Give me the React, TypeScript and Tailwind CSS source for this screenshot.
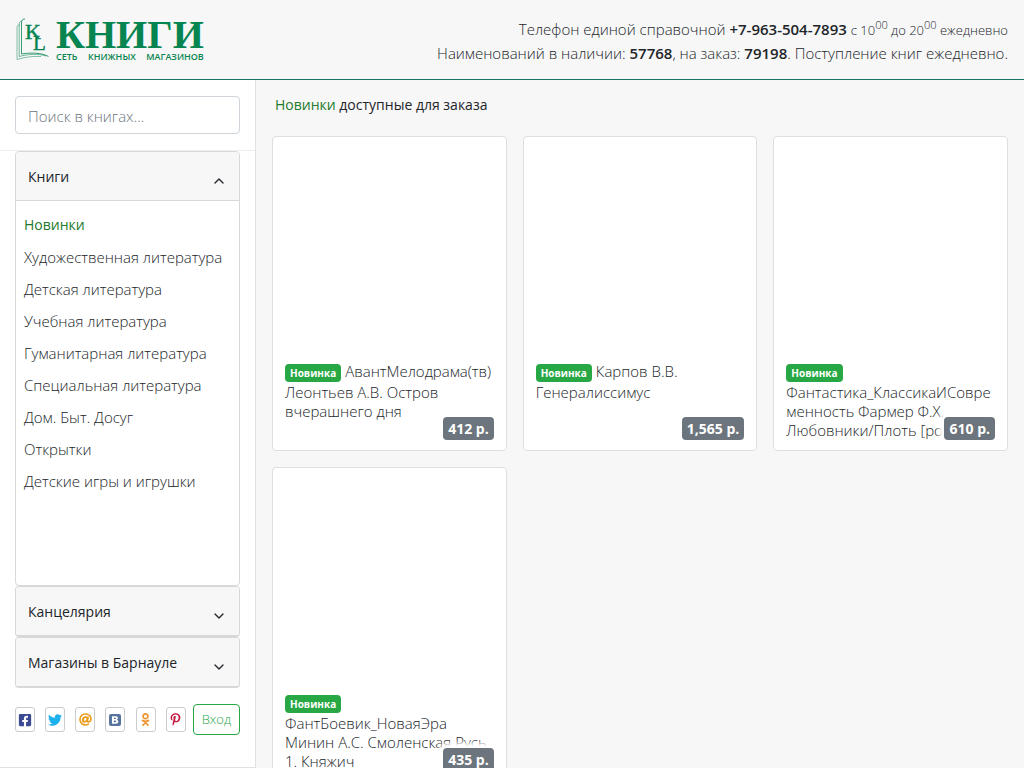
import { ChevronDown, ChevronUp } from "lucide-react";
import { FaFacebookSquare, FaTwitter, FaAt, FaOdnoklassniki, FaPinterestP } from "react-icons/fa";

const categories = [
  "Новинки",
  "Художественная литература",
  "Детская литература",
  "Учебная литература",
  "Гуманитарная литература",
  "Специальная литература",
  "Дом. Быт. Досуг",
  "Открытки",
  "Детские игры и игрушки",
];

const books = [
  { title: "АвантМелодрама(тв) Леонтьев А.В. Остров вчерашнего дня", price: "412 р." },
  { title: "Карпов В.В. Генералиссимус", price: "1,565 р." },
  { title: "Фантастика_КлассикаИСовременность Фармер Ф.Х. Любовники/Плоть [ро", price: "610 р." },
  { title: "ФантБоевик_НоваяЭра Минин А.С. Смоленская Русь 1. Княжич", price: "435 р." },
];

function VkIcon() {
  return (
    <svg viewBox="0 0 14 14" className="size-3.5">
      <rect x="1" y="1" width="12" height="12" rx="2" fill="#56749f" />
      <path
        d="M4 3.300h3.600c1.500 0 2.300.6 2.300 1.800 0 .8-.4 1.300-1.100 1.600.9.2 1.500.9 1.500 1.800 0 1.500-1 2.200-2.700 2.200H4zM6 4.800v1.300h1c.6 0 .9-.2.9-.7s-.3-.6-.9-.6zm0 2.600v1.800h1.200c.7 0 1-.3 1-.9s-.3-.9-1-.9z"
        fill="#fff"
        fillRule="evenodd"
      />
    </svg>
  );
}

const socials = [
  { name: "Facebook", icon: <FaFacebookSquare size={14} color="#3b4a93" /> },
  { name: "Twitter", icon: <FaTwitter size={14} color="#1cb1ec" /> },
  { name: "Mail.ru", icon: <FaAt size={13} color="#eb9c1c" /> },
  { name: "ВКонтакте", icon: <VkIcon /> },
  { name: "Одноклассники", icon: <FaOdnoklassniki size={13} color="#f0932b" /> },
  { name: "Pinterest", icon: <FaPinterestP size={13} color="#c3143a" /> },
];

function Logo() {
  return (
    <a href="#" className="flex items-start text-[#078550]">
      <svg viewBox="0 0 36 44" className="h-11 w-9 overflow-visible" fill="none" stroke="currentColor">
        <path d="M9 1C6 1 5.500 3 5.500 5v31c9-1.500 20-1.500 27 2.500" strokeWidth=".8" />
        <path d="M6 3C3.500 3 3.200 5 3.200 7v31.500c9-2.500 19-3 27-.5" strokeWidth=".7" opacity=".8" />
        <path d="M4 7C1.500 7 1 8 1 10v31.500c8-2.500 16-3.500 24-3" strokeWidth=".7" opacity=".7" />
        <text x="9" y="21" fontFamily="Liberation Serif, serif" fontSize="22" fill="currentColor" strokeWidth=".4">K</text>
        <text x="17" y="32" fontFamily="Liberation Serif, serif" fontSize="21" fill="currentColor" strokeWidth=".4">L</text>
      </svg>
      <span className="flex flex-col pl-1">
        <span className="font-['Liberation_Serif',serif] text-[40px] leading-[34px] font-bold">КНИГИ</span>
        <span className="flex justify-between text-[9px] leading-[10px] font-semibold">
          <span>СЕТЬ</span>
          <span>КНИЖНЫХ</span>
          <span>МАГАЗИНОВ</span>
        </span>
      </span>
    </a>
  );
}

function SectionButton({ label, open = false }: { label: string; open?: boolean }) {
  const Icon = open ? ChevronUp : ChevronDown;
  return (
    <button
      type="button"
      aria-expanded={open}
      className="flex h-12 w-full items-center justify-between bg-[#f7f7f7] px-3 pt-0.5 text-left text-sm font-medium"
    >
      {label}
      <Icon size={16} className="mt-2" />
    </button>
  );
}

function BookCard({ title, price }: { title: string; price: string }) {
  return (
    <article className="relative flex h-[315px] flex-col justify-end rounded border border-[#dfdfdf] bg-white px-3 pb-2.5">
      <a href="#" className="block h-[78px] leading-[19px] break-words">
        <span className="my-px mr-1 inline-block rounded bg-[#28a745] px-[5px] text-[10px] leading-[18px] font-bold text-white">
          Новинка
        </span>
        {title}
      </a>
      <span className="absolute right-3 bottom-2.5 rounded bg-[#6c757d] px-[5px] text-sm leading-[23px] font-bold text-white shadow-[0_0_4px_5px_#fff]">
        {price}
      </span>
    </article>
  );
}

export default function App() {
  return (
    <div className="flex h-screen flex-col overflow-hidden bg-[#f7f7f7] font-['Open_Sans','Noto_Sans',sans-serif] text-[15px] font-light text-[#212529]">
      <header className="flex h-20 shrink-0 items-center justify-between border-b border-[#1a7560] px-4">
        <Logo />
        <div className="pt-0.5 text-right leading-6">
          <p>
            Телефон единой справочной <b className="font-semibold">+7-963-504-7893</b>{" "}
            <small className="text-[13px] leading-none">
              с 10<sup className="text-[11px]">00</sup> до 20<sup className="text-[11px]">00</sup> ежедневно
            </small>
          </p>
          <p>
            Наименований в наличии: <b className="font-semibold">57768</b>, на заказ:{" "}
            <b className="font-semibold">79198</b>. Поступление книг ежедневно.
          </p>
        </div>
      </header>

      <div className="flex min-h-0 flex-1">
        <aside className="flex w-64 shrink-0 flex-col border-r border-b border-[#dfe1e3] bg-white">
          <form className="border-b border-[#eeeeee] px-[15px] py-4">
            <input
              type="search"
              aria-label="Поиск в книгах"
              placeholder="Поиск в книгах..."
              className="block h-[38px] w-full rounded border border-[#ced4da] bg-white px-3 pt-0.5 font-light placeholder:text-[#6c757d]"
            />
          </form>
          <nav className="px-[15px]">
            <section className="overflow-hidden rounded border border-[#d8d8d8]">
              <SectionButton label="Книги" open />
              <ul className="h-[385px] border-t border-[#d8d8d8] px-2 pt-2">
                {categories.map((name, i) => (
                  <li key={name}>
                    <a href="#" className={i === 0 ? "block text-sm leading-8 font-medium text-[#1f7a2c]" : "block leading-8"}>
                      {name}
                    </a>
                  </li>
                ))}
              </ul>
            </section>
            <section className="overflow-hidden rounded border border-b-2 border-[#d8d8d8]">
              <SectionButton label="Канцелярия" />
            </section>
            <section className="overflow-hidden rounded border border-b-2 border-[#d8d8d8]">
              <SectionButton label="Магазины в Барнауле" />
            </section>
          </nav>
          <div className="flex items-center gap-[7px] px-[15px] pt-4">
            <div className="flex flex-1 items-center justify-between">
              {socials.map(({ name, icon }) => (
                <a
                  key={name}
                  href="#"
                  aria-label={name}
                  className="flex h-[25px] w-5 items-center justify-center rounded-[3px] border border-[#cccccc]"
                >
                  {icon}
                </a>
              ))}
            </div>
            <button type="button" className="h-[31px] rounded border border-[#28a745] px-2 text-[13px] font-light text-[#28a745]">
              Вход
            </button>
          </div>
        </aside>

        <main className="min-w-0 flex-1 overflow-y-auto px-4 [scrollbar-width:none]">
          <h1 className="px-[3px] pt-[13px] pb-[19px] text-sm leading-6 font-medium">
            <a href="#" className="text-[#1f7a2c]">Новинки</a> доступные для заказа
          </h1>
          <div className="grid grid-cols-3 gap-4">
            {books.map((book) => (
              <BookCard key={book.title} {...book} />
            ))}
          </div>
        </main>
      </div>
    </div>
  );
}
